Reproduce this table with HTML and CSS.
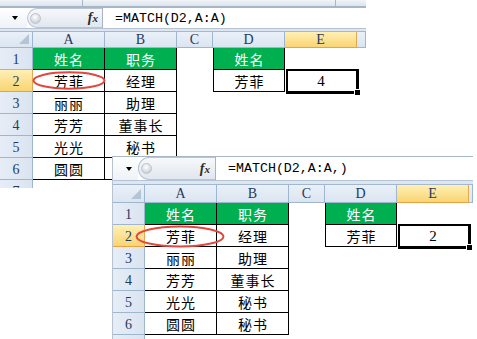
FILE: index.html
```html
<!DOCTYPE html>
<html>
<head>
<meta charset="utf-8">
<link rel="stylesheet" href="styles.css">
</head>
<body>
<div class="sheet s1">
  <div class="strip"><span class="tick t1"></span><span class="tick t2"></span></div>
  <div class="fbar">
    <div class="namebox"><span class="arrow"></span></div>
    <div class="pill"><span class="knob"></span><span class="fx">f<span class="x">x</span></span></div>
    <div class="formula">=MATCH(D2,A:A)</div>
  </div>
  <div class="gap"></div>
  <div class="grid">
    <div class="hd corner"><span class="tri"></span></div>
    <div class="hd">A</div><div class="hd">B</div><div class="hd">C</div><div class="hd">D</div><div class="hd sel">E</div><div class="hd"></div>

    <div class="rh">1</div>
    <div class="c t g">姓名</div><div class="c t g">职务</div><div class="c"></div><div class="c t l g">姓名</div><div class="c"></div><div class="c"></div>

    <div class="rh sel">2</div>
    <div class="c t ring"><span>芳菲</span><svg class="oval o1" width="74" height="19" viewBox="0 0 74 19"><ellipse cx="37" cy="9.5" rx="35.5" ry="8.2"/></svg></div>
    <div class="c t">经理</div><div class="c"></div><div class="c t l">芳菲</div>
    <div class="c num active">4<span class="selbox"><span class="handle"></span></span></div><div class="c"></div>

    <div class="rh">3</div>
    <div class="c t">丽丽</div><div class="c t">助理</div><div class="c"></div><div class="c"></div><div class="c"></div><div class="c"></div>

    <div class="rh">4</div>
    <div class="c t">芳芳</div><div class="c t">董事长</div><div class="c"></div><div class="c"></div><div class="c"></div><div class="c"></div>

    <div class="rh">5</div>
    <div class="c t">光光</div><div class="c t">秘书</div><div class="c"></div><div class="c"></div><div class="c"></div><div class="c"></div>

    <div class="rh">6</div>
    <div class="c t">圆圆</div><div class="c t">秘书</div><div class="c"></div><div class="c"></div><div class="c"></div><div class="c"></div>

    <div class="rh">7</div>
    <div class="c"></div><div class="c"></div><div class="c"></div><div class="c"></div><div class="c"></div><div class="c"></div>
  </div>
</div>

<div class="sheet s2">
  <div class="fbar">
    <div class="namebox"><span class="arrow"></span></div>
    <div class="pill"><span class="knob"></span><span class="fx">f<span class="x">x</span></span></div>
    <div class="formula">=MATCH(D2,A:A,)</div>
  </div>
  <div class="gap"></div>
  <div class="grid">
    <div class="hd corner"><span class="tri"></span></div>
    <div class="hd">A</div><div class="hd">B</div><div class="hd">C</div><div class="hd">D</div><div class="hd sel">E</div><div class="hd"></div>

    <div class="rh">1</div>
    <div class="c t g">姓名</div><div class="c t g">职务</div><div class="c"></div><div class="c t l g">姓名</div><div class="c"></div><div class="c"></div>

    <div class="rh sel">2</div>
    <div class="c t ring"><span>芳菲</span><svg class="oval o2" width="90" height="23" viewBox="0 0 90 23"><ellipse cx="45" cy="11.5" rx="43.5" ry="10"/></svg></div>
    <div class="c t">经理</div><div class="c"></div><div class="c t l">芳菲</div>
    <div class="c num active">2<span class="selbox"><span class="handle"></span></span></div><div class="c"></div>

    <div class="rh">3</div>
    <div class="c t">丽丽</div><div class="c t">助理</div><div class="c"></div><div class="c"></div><div class="c"></div><div class="c"></div>

    <div class="rh">4</div>
    <div class="c t">芳芳</div><div class="c t">董事长</div><div class="c"></div><div class="c"></div><div class="c"></div><div class="c"></div>

    <div class="rh">5</div>
    <div class="c t">光光</div><div class="c t">秘书</div><div class="c"></div><div class="c"></div><div class="c"></div><div class="c"></div>

    <div class="rh">6</div>
    <div class="c t">圆圆</div><div class="c t">秘书</div><div class="c"></div><div class="c"></div><div class="c"></div><div class="c"></div>

    <div class="rh">7</div>
    <div class="c"></div><div class="c"></div><div class="c"></div><div class="c"></div><div class="c"></div><div class="c"></div>
  </div>
</div>
</body>
</html>
```

FILE: styles.css
```css
* { box-sizing: border-box; margin: 0; padding: 0; }
html, body { background: #fff; }
body {
  margin: 0;
  width: 477px;
  height: 339px;
  overflow: hidden;
  position: relative;
  font-family: "Noto Sans CJK SC", "Noto Sans", sans-serif;
}

.sheet {
  display: flex;
  flex-direction: column;
  overflow: hidden;
  background: #fff;
}
.s1 { width: 366px; height: 188px; }
.s2 {
  position: absolute;
  left: 112px;
  top: 156px;
  width: 361px;
  height: 183px;
  border-top: 1px solid #a9b6c6;
  border-left: 1px solid #b7c3d1;
}

/* top ribbon edge */
.strip {
  flex: none;
  height: 8px;
  position: relative;
  background: linear-gradient(#f1f4f8, #dde4ec);
  border-bottom: 2px solid #a7b6c9;
}
.tick { position: absolute; top: 0; bottom: 0; width: 1px; background: #a9b6c6; }
.t1 { left: 82px; }
.t2 { left: 335px; }

/* formula bar */
.fbar {
  flex: none;
  display: flex;
  height: 21px;
  background: #fff;
  border-bottom: 1px solid #b6c3d3;
}
.s2 .fbar { height: 24px; }
.namebox {
  width: 27px;
  display: flex;
  align-items: center;
  justify-content: center;
  padding-left: 3px;
  background: linear-gradient(#ffffff, #eef2f7);
}
.s2 .namebox { width: 25px; padding-left: 7px; }
.arrow {
  width: 0; height: 0;
  border-left: 3.5px solid transparent;
  border-right: 3.5px solid transparent;
  border-top: 4px solid #000;
}
.pill {
  width: 75px;
  display: flex;
  align-items: center;
  justify-content: space-between;
  padding: 0 4px 0 2px;
  border: 1px solid #b9c4d2;
  border-right: none;
  border-radius: 11px 0 0 11px;
  background: linear-gradient(#f6f8fb, #e1e7ef);
}
.s2 .pill { width: 77px; padding: 0 5px 0 2px; }
.knob {
  width: 11px; height: 11px;
  border-radius: 50%;
  border: 1px solid #bcc3cd;
  background: radial-gradient(circle at 45% 35%, #ffffff, #cfd4db 70%, #b9bfc8);
}
.fx {
  font-family: "Liberation Serif", serif;
  font-style: italic;
  font-weight: bold;
  font-size: 14px;
  color: #2a2a2a;
  line-height: 1;
}
.fx .x { font-size: 11px; }
.formula {
  flex: 1;
  display: flex;
  align-items: center;
  padding-left: 12px;
  border-left: 1px solid #a6b4c5;
  font-family: "Liberation Mono", monospace;
  font-size: 13.3px;
  color: #000;
  white-space: nowrap;
}

.gap {
  flex: none;
  height: 3px;
  background: #dde6f1;
  border-bottom: 1px solid #a3b8cf;
}
.s2 .gap { height: 4px; }

/* grid */
.grid {
  display: grid;
  grid-template-columns: 33px 72px 72px 36px 72px 72px 1fr;
  grid-template-rows: 16px repeat(7, 22px);
}
.s2 .grid {
  grid-template-columns: 32px 72px 72px 36px 72px 72px 1fr;
  grid-template-rows: 18px repeat(7, 22px);
}

.hd, .rh {
  display: flex;
  justify-content: center;
  font-family: "Liberation Serif", serif;
  font-size: 14px;
  color: #1f3b60;
  border-right: 1px solid #9eb6ce;
  border-bottom: 1px solid #9eb6ce;
}
.hd {
  align-items: center;
  background: linear-gradient(#e9f0f8, #dbe5f1);
}
.rh {
  align-items: flex-end;
  padding-bottom: 1px;
  background: linear-gradient(90deg, #e6edf7, #dae4f0);
}
.hd.sel, .rh.sel {
  background: linear-gradient(#fff0b4, #f9d474);
  border-right-color: #e4a94f;
  border-bottom-color: #e8a23f;
}
.corner {
  justify-content: flex-end;
  align-items: flex-end;
  padding: 0 3px 3px 0;
}
.tri {
  width: 0; height: 0;
  border-left: 10px solid transparent;
  border-bottom: 10px solid #b3c4d7;
}

.c {
  display: flex;
  align-items: center;
  justify-content: center;
  font-size: 14px;
  letter-spacing: 1px;
  padding-left: 1px;
  color: #000;
  white-space: nowrap;
}
.t { border-right: 1px solid #000; border-bottom: 1px solid #000; }
.l { border-left: 1px solid #000; }
.g { background: #00b050; color: #fff; }
.num { font-family: "Liberation Serif", serif; font-size: 15px; letter-spacing: 0; padding-left: 0; }

.ring { position: relative; }
.oval { position: absolute; overflow: visible; }
.oval ellipse { fill: none; stroke: #e2463c; stroke-width: 2; }
.o1 { left: -1px; top: 1px; }
.o2 { left: -10px; top: 0; }

.active { position: relative; }
.selbox {
  position: absolute;
  left: 1px; top: -1px; right: -2px; bottom: -2px;
  border-style: solid;
  border-color: #000;
  border-width: 2px 3px 3px 2px;
}
.handle {
  position: absolute;
  right: -5px; bottom: -5px;
  width: 7px; height: 7px;
  background: #000;
  border: 1px solid #fff;
}
```
